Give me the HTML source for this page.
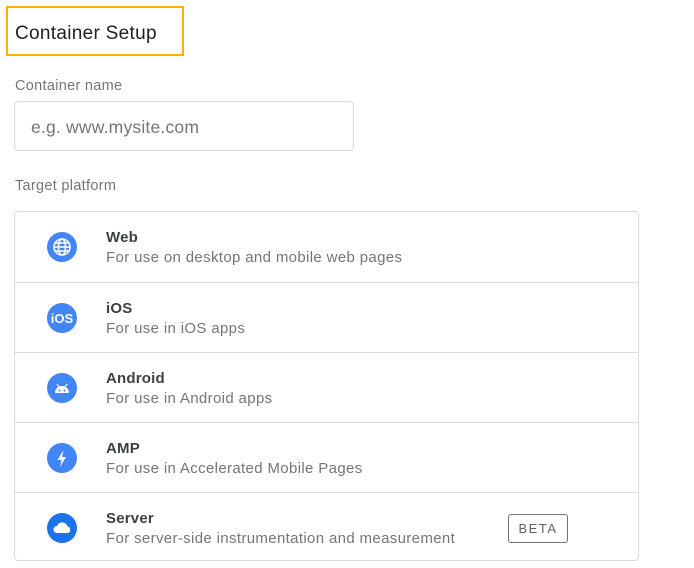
<!DOCTYPE html>
<html><head><style>
body{margin:0;width:694px;height:568px;background:#fff;font-family:"Liberation Sans",sans-serif;position:relative;overflow:hidden}
.hd{position:absolute;left:6px;top:6px;width:174px;height:46px;border:2px solid #f4b400;}
.hd span{position:absolute;left:7px;top:15px;font-size:19px;color:#202124;letter-spacing:0.3px}
.lbl{position:absolute;left:15px;font-size:14.5px;color:#757575;letter-spacing:0.3px}
.inp{position:absolute;left:14px;top:101px;width:338px;height:48px;border:1px solid #dadce0;border-radius:4px}
.inp span{position:absolute;left:16px;top:15px;font-size:17.5px;color:#757575;letter-spacing:0.2px}
.list{position:absolute;left:14px;top:211px;width:623px;height:348px;border:1px solid #dadce0;border-radius:4px}
.row{position:absolute;left:0;width:623px;height:70px;border-top:1px solid #dadce0;box-sizing:border-box}
.row:first-child{border-top:none}
.ic{position:absolute;left:32px;top:20px;width:30px;height:30px;border-radius:50%;background:#4285f4}
.t{position:absolute;left:91px;top:17px;font-size:15px;font-weight:bold;color:#3c4043;letter-spacing:0.2px}
.s{position:absolute;left:91px;top:37px;font-size:15px;color:#757575;letter-spacing:0.35px}
.beta{position:absolute;left:493px;top:21px;width:58px;height:27px;border:1px solid #757575;border-radius:3px;font-size:13px;color:#5f6368;text-align:center;line-height:27px;letter-spacing:1.5px}
</style></head><body>
<div class="hd"><span>Container Setup</span></div>
<div class="lbl" style="top:78px">Container name</div>
<div class="inp"><span>e.g. www.mysite.com</span></div>
<div class="lbl" style="top:178px">Target platform</div>
<div class="list">
<div class="row" style="top:0"><div class="ic"><svg width="30" height="30" viewBox="0 0 30 30" fill="none" stroke="#fff" stroke-width="1.6"><circle cx="15" cy="15" r="8"/><ellipse cx="15" cy="15" rx="3.5" ry="8"/><path d="M7 15h16M8.5 11h13M8.5 19h13"/></svg></div><div class="t">Web</div><div class="s">For use on desktop and mobile web pages</div></div>
<div class="row" style="top:70px"><div class="ic"><svg width="30" height="30"><text x="15" y="20" text-anchor="middle" font-family="Liberation Sans" font-weight="bold" font-size="13" fill="#fff">iOS</text></svg></div><div class="t">iOS</div><div class="s">For use in iOS apps</div></div>
<div class="row" style="top:140px"><div class="ic"><svg width="30" height="30"><path d="M8 20a7 7 0 0 1 14 0z" fill="#fff"/><path d="M10 11l2 3M20 11l-2 3" stroke="#fff" stroke-width="1.2"/><circle cx="12.5" cy="17.5" r="1" fill="#4285f4"/><circle cx="17.5" cy="17.5" r="1" fill="#4285f4"/></svg></div><div class="t">Android</div><div class="s">For use in Android apps</div></div>
<div class="row" style="top:210px"><div class="ic"><svg width="30" height="30"><path d="M16.5 7l-6 10h4l-1.5 7 6-10h-4z" fill="#fff"/></svg></div><div class="t">AMP</div><div class="s">For use in Accelerated Mobile Pages</div></div>
<div class="row" style="top:280px"><div class="ic" style="background:#1a73e8"><svg width="30" height="30"><path d="M10 20a3.5 3.5 0 0 1 0-7 5.5 5.5 0 0 1 10.5 0.5A3.3 3.3 0 0 1 20.5 20z" fill="#fff"/></svg></div><div class="t">Server</div><div class="s">For server-side instrumentation and measurement</div><div class="beta">BETA</div></div>
</div>
</body></html>
